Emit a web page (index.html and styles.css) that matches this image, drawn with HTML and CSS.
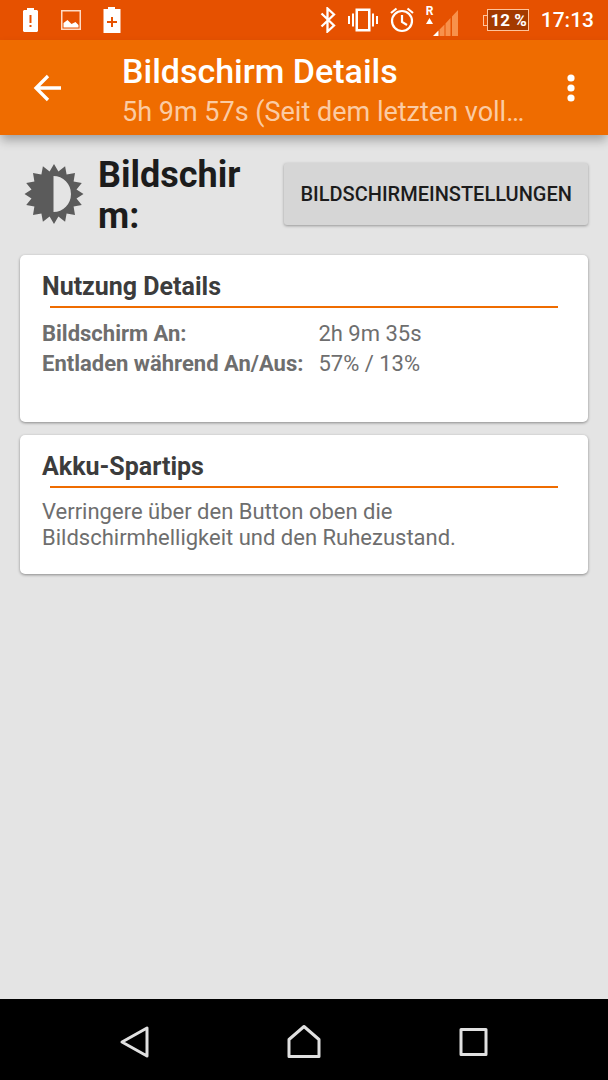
FILE: index.html
```html
<!DOCTYPE html>
<html lang="de">
<head>
<meta charset="utf-8">
<meta name="viewport" content="width=device-width, initial-scale=1">
<title>Bildschirm Details</title>
<link rel="stylesheet" href="styles.css">
</head>
<body>
<div class="screen">
  <div class="status-bar">
    <div class="status-notifications">
      <svg width="16" height="24" viewBox="0 0 16 24"><path fill="#fff" fill-rule="evenodd" d="M4 0h7v2h3l1 1v20l-1 1H1l-1-1V3l1-1h3zM6.500 7v8h2V7zM6.500 17v2h2v-2z"/></svg>
      <svg width="20" height="20" viewBox="0 0 20 20"><path fill="none" stroke="#ffd9c2" stroke-width="1.500" d="M.75.75h18.500v18.500H.75z"/><path fill="#fff" d="M2.500 17.500V13l4-3 4 4 4-2 3 3v2.500z"/></svg>
      <svg width="18" height="26" viewBox="0 0 18 26"><path fill="#fff" fill-rule="evenodd" d="M5 0h7v2h5.500v24H.5V2H5zM8 10v4H4v2h4v4h2v-4h4v-2h-4v-4z"/></svg>
    </div>
    <div class="status-system">
      <svg width="16" height="26" viewBox="0 0 16 26"><path fill="none" stroke="#fff" stroke-width="2.300" d="M1.500 6.500l12.500 12-6.500 6V1.500l6.500 6-12.500 12"/></svg>
      <svg width="30" height="24" viewBox="0 0 30 24"><path fill="none" stroke="#fff" stroke-width="2.500" d="M8.750 1.750h12.500v20.500H8.750z"/><path fill="none" stroke="#fff" stroke-width="2" d="M5 5.500v13M1 8v8M25 5.500v13M29 8v8"/></svg>
      <svg width="24" height="26" viewBox="0 0 24 26"><g fill="none" stroke="#fff" stroke-width="2.200"><circle cx="12" cy="14" r="10"/><path d="M1 6l5.500-4.500M23 6l-5.500-4.500M12 8v7l5 3"/></g></svg>
      <div class="signal">
        <div class="roaming"><span>R</span><svg width="7" height="6" viewBox="0 0 7 6"><path fill="#fff" d="M3.500 0L7 6H0z"/></svg></div>
        <svg width="25" height="26" viewBox="0 0 25 26"><path fill="#fff" d="M5.500 20.500V26H0z"/><path fill="#f8914b" d="M6.500 19.500l5-5V26h-5zM12.500 13.500l5-5.500v18h-5zM19 6.500L25 0v26h-6z"/></svg>
      </div>
      <div class="battery"><i class="battery-tip"></i><span class="battery-level">12 %</span></div>
      <time class="clock">17:13</time>
    </div>
  </div>

  <header class="app-bar">
    <button class="icon-button" type="button" aria-label="Zurück"><svg width="28" height="28" viewBox="0 0 28 28"><path fill="none" stroke="#fff" stroke-width="3.300" d="M28 14H3M15 2L3 14l12 12"/></svg></button>
    <div class="app-titles">
      <h1 class="app-title">Bildschirm Details</h1>
      <p class="app-subtitle">5h 9m 57s (Seit dem letzten voll…</p>
    </div>
    <button class="icon-button menu-button" type="button" aria-label="Menü"><svg width="8" height="28" viewBox="0 0 8 28"><g fill="#fff"><circle cx="4" cy="4" r="3.600"/><circle cx="4" cy="14" r="3.600"/><circle cx="4" cy="24" r="3.600"/></g></svg></button>
  </header>

  <main class="content">
    <div class="intro">
      <svg class="brightness" width="60" height="60" viewBox="0 0 60 60"><path fill="#5b5b5b" fill-rule="evenodd" d="M30 0l4.400 7.500 6.700-5.300 1.500 8.200 8.400-1.400-1.400 8.400 8.200 1.500-5.300 6.700L59.500 30l-7 4.400 5.300 6.700-8.200 1.500 1.400 8.400-8.400-1.400-1.500 8.200-6.700-5.300L30 60l-4.400-7.500-6.700 5.300-1.500-8.200L9 51l1.400-8.400-8.200-1.500 5.300-6.700L.5 30l7-4.400-5.300-6.700 8.200-1.500L9 9l8.400 1.400 1.500-8.200 6.700 5.300zM29.500 12v36a17.500 18 0 0 0 0-36z"/></svg>
      <h2 class="intro-title">Bildschirm:</h2>
      <button class="settings-button" type="button">BILDSCHIRMEINSTELLUNGEN</button>
    </div>

    <section class="card usage">
      <h3 class="card-title">Nutzung Details</h3>
      <table class="stats">
        <tr><th scope="row">Bildschirm An:</th><td>2h 9m 35s</td></tr>
        <tr><th scope="row">Entladen während An/Aus:</th><td>57% / 13%</td></tr>
      </table>
    </section>

    <section class="card">
      <h3 class="card-title">Akku-Spartips</h3>
      <p class="tip">Verringere über den Button oben die Bildschirmhelligkeit und den Ruhezustand.</p>
    </section>
  </main>

  <nav class="nav-bar">
    <button class="icon-button" type="button" aria-label="Zurück"><svg width="34" height="34" viewBox="0 0 34 34"><path fill="none" stroke="#e0e0e0" stroke-width="3" stroke-linejoin="round" d="M29 3v28L4 17z"/></svg></button>
    <button class="icon-button" type="button" aria-label="Startseite"><svg width="34" height="34" viewBox="0 0 34 34"><path fill="none" stroke="#e0e0e0" stroke-width="3" stroke-linejoin="round" d="M2 31.500V14.500L17 1.500l15 13v17z"/></svg></button>
    <button class="icon-button" type="button" aria-label="Letzte Apps"><svg width="34" height="34" viewBox="0 0 34 34"><path fill="none" stroke="#e0e0e0" stroke-width="3" stroke-linejoin="round" d="M5 4.500h25v25H5z"/></svg></button>
  </nav>
</div>
</body>
</html>
```
FILE: styles.css
```css
* {
  box-sizing: border-box;
}

body {
  margin: 0;
  font-family: Roboto, "Noto Sans", sans-serif;
  background: #e4e4e4;
}

h1, h2, h3, p {
  margin: 0;
}

svg {
  display: block;
  flex: none;
}

button {
  font-family: inherit;
}

.screen {
  display: flex;
  flex-direction: column;
  min-height: 100vh;
}

.status-bar {
  display: flex;
  justify-content: space-between;
  height: 40px;
  padding: 0 14px 0 23px;
  background: #e65100;
  color: #fff;
}

.status-notifications,
.status-system {
  display: flex;
  align-items: center;
}

.status-notifications {
  gap: 22px;
}

.status-system {
  gap: 12px;
}

.signal {
  display: flex;
  align-items: flex-end;
  margin-right: 13px;
}

.roaming {
  display: flex;
  flex-direction: column;
  align-items: center;
  gap: 1px;
  height: 31px;
  font-size: 12px;
  line-height: 12px;
  font-weight: 700;
}

.battery {
  display: flex;
  align-items: center;
}

.battery-tip {
  width: 4px;
  height: 11px;
  border: 1px solid #ffc39c;
  border-right: 0;
}

.battery-level {
  padding: 0 1px 0 2px;
  border: 1px solid #ffc39c;
  background: #a33a00;
  font-size: 17px;
  line-height: 20px;
  font-weight: 700;
}

.clock {
  font-size: 21px;
  font-weight: 500;
}

.icon-button {
  display: flex;
  align-items: center;
  justify-content: center;
  padding: 0;
  border: 0;
  background: none;
}

.app-bar {
  display: flex;
  align-items: center;
  min-height: 95px;
  padding: 0 33px;
  background: #ef6c00;
  box-shadow: 0 6px 10px -1px rgba(0, 0, 0, 0.3);
}

.app-titles {
  flex: 1;
  min-width: 0;
  padding: 6px 0 0 61px;
}

.app-title {
  color: #fff;
  font-size: 34px;
  line-height: 42px;
  font-weight: 500;
}

.app-subtitle {
  overflow: hidden;
  color: #fbcba3;
  font-size: 27px;
  line-height: 40px;
  white-space: nowrap;
}

.content {
  flex: 1;
  display: flex;
  flex-direction: column;
  gap: 13px;
  padding: 20px 20px 24px;
}

.intro {
  display: flex;
  align-items: center;
  padding: 0 0 5px 4px;
}

.brightness,
.settings-button {
  margin-bottom: 4px;
}

.intro-title {
  flex: 1;
  min-width: 0;
  padding: 0 36px 0 14px;
  color: #1c1c1c;
  font-size: 36px;
  line-height: 41px;
  font-weight: 700;
  overflow-wrap: anywhere;
}

.settings-button {
  height: 62px;
  padding: 0 16px;
  border: 0;
  border-radius: 3px;
  background: #d6d6d6;
  box-shadow: 0 1px 3px rgba(0, 0, 0, 0.35);
  color: #1c1c1c;
  font-size: 20px;
  font-weight: 500;
}

.card {
  padding: 16px 22px 23px;
  border-radius: 5px;
  background: #fff;
  box-shadow: 0 1px 3px rgba(0, 0, 0, 0.4);
}

.usage {
  padding-bottom: 43px;
}

.card-title {
  color: #3c3c3c;
  font-size: 25px;
  line-height: 31px;
  font-weight: 700;
}

.card-title::after {
  content: "";
  display: block;
  height: 2px;
  margin: 4px 8px 11px;
  background: #ef6c00;
}

.stats {
  border-spacing: 0;
  color: #6e6e6e;
  font-size: 22px;
  line-height: 30px;
}

.stats th,
.stats td {
  padding: 0;
  text-align: left;
}

.stats th {
  padding-right: 15px;
}

.tip {
  color: #6e6e6e;
  font-size: 22px;
  line-height: 26px;
}

.nav-bar {
  display: grid;
  grid-template-columns: repeat(3, 1fr);
  height: 81px;
  padding: 4px 50px 0;
  background: #000;
}
```
